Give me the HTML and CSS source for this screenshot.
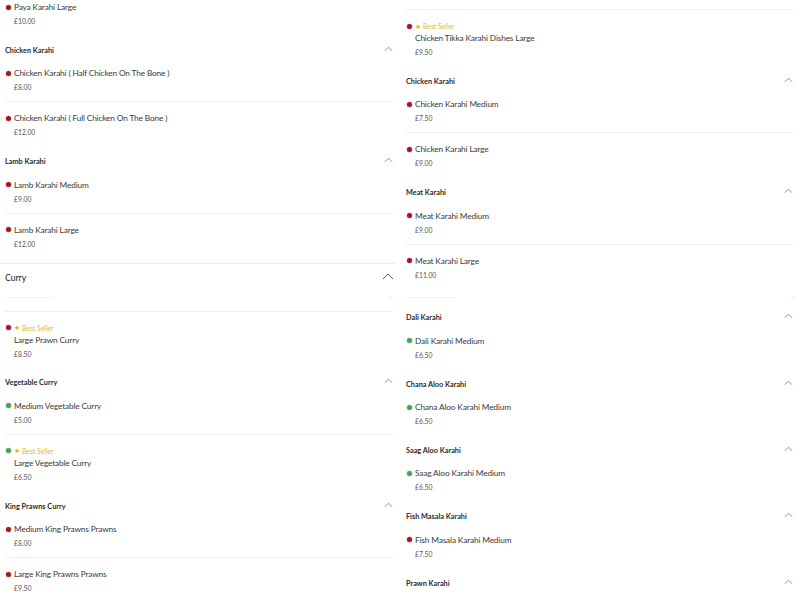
FILE: index.html
```
<!DOCTYPE html>
<html>
<head>
<meta charset="utf-8">
<link rel="stylesheet" href="styles.css">
</head>
<body>
<div class="page">
  <div class="col col-left">
    <div class="item first">
      <div class="name"><span class="dot red"></span>Paya Karahi Large</div>
      <div class="price">£10.00</div>
    </div>

    <div class="group">
      <div class="sub-head"><span>Chicken Karahi</span><svg class="chev" viewBox="0 0 10 6"><path d="M1 5 L5 1 L9 5"/></svg></div>
      <div class="item">
        <div class="name"><span class="dot red"></span>Chicken Karahi ( Half Chicken On The Bone )</div>
        <div class="price">£8.00</div>
      </div>
      <div class="item">
        <div class="name"><span class="dot red"></span>Chicken Karahi ( Full Chicken On The Bone )</div>
        <div class="price">£12.00</div>
      </div>
    </div>

    <div class="group">
      <div class="sub-head"><span>Lamb Karahi</span><svg class="chev" viewBox="0 0 10 6"><path d="M1 5 L5 1 L9 5"/></svg></div>
      <div class="item">
        <div class="name"><span class="dot red"></span>Lamb Karahi Medium</div>
        <div class="price">£9.00</div>
      </div>
      <div class="item">
        <div class="name"><span class="dot red"></span>Lamb Karahi Large</div>
        <div class="price">£12.00</div>
      </div>
    </div>

    <div class="section">
      <div class="sec-head"><span>Curry</span><svg class="chev-big" viewBox="0 0 14 8"><path d="M1 7 L7 1 L13 7"/></svg></div>
      <div class="ghost"><span class="ghost-l"></span><span class="ghost-r"></span></div>
      <div class="item">
        <div class="badge"><span class="dot red"></span><span class="star">★</span>Best Seller</div>
        <div class="name indent">Large Prawn Curry</div>
        <div class="price">£8.50</div>
      </div>

      <div class="group">
        <div class="sub-head"><span>Vegetable Curry</span><svg class="chev" viewBox="0 0 10 6"><path d="M1 5 L5 1 L9 5"/></svg></div>
        <div class="item">
          <div class="name"><span class="dot green"></span>Medium Vegetable Curry</div>
          <div class="price">£5.00</div>
        </div>
        <div class="item">
          <div class="badge"><span class="dot green"></span><span class="star">★</span>Best Seller</div>
          <div class="name indent">Large Vegetable Curry</div>
          <div class="price">£6.50</div>
        </div>
      </div>

      <div class="group">
        <div class="sub-head"><span>King Prawns Curry</span><svg class="chev" viewBox="0 0 10 6"><path d="M1 5 L5 1 L9 5"/></svg></div>
        <div class="item">
          <div class="name"><span class="dot red"></span>Medium King Prawns Prawns</div>
          <div class="price">£8.00</div>
        </div>
        <div class="item">
          <div class="name"><span class="dot red"></span>Large King Prawns Prawns</div>
          <div class="price">£9.50</div>
        </div>
      </div>
    </div>
  </div>

  <div class="col col-right">
    <div class="item topline">
      <div class="badge"><span class="dot red"></span><span class="star">★</span>Best Seller</div>
      <div class="name indent">Chicken Tikka Karahi Dishes Large</div>
      <div class="price">£9.50</div>
    </div>

    <div class="group">
      <div class="sub-head"><span>Chicken Karahi</span><svg class="chev" viewBox="0 0 10 6"><path d="M1 5 L5 1 L9 5"/></svg></div>
      <div class="item">
        <div class="name"><span class="dot red"></span>Chicken Karahi Medium</div>
        <div class="price">£7.50</div>
      </div>
      <div class="item">
        <div class="name"><span class="dot red"></span>Chicken Karahi Large</div>
        <div class="price">£9.00</div>
      </div>
    </div>

    <div class="group">
      <div class="sub-head"><span>Meat Karahi</span><svg class="chev" viewBox="0 0 10 6"><path d="M1 5 L5 1 L9 5"/></svg></div>
      <div class="item">
        <div class="name"><span class="dot red"></span>Meat Karahi Medium</div>
        <div class="price">£9.00</div>
      </div>
      <div class="item">
        <div class="name"><span class="dot red"></span>Meat Karahi Large</div>
        <div class="price">£11.00</div>
      </div>
    </div>

    <div class="ghost2"><span class="ghost-l"></span><span class="ghost-r"></span></div>

    <div class="group">
      <div class="sub-head"><span>Dali Karahi</span><svg class="chev" viewBox="0 0 10 6"><path d="M1 5 L5 1 L9 5"/></svg></div>
      <div class="item">
        <div class="name"><span class="dot green"></span>Dali Karahi Medium</div>
        <div class="price">£6.50</div>
      </div>
    </div>

    <div class="group">
      <div class="sub-head"><span>Chana Aloo Karahi</span><svg class="chev" viewBox="0 0 10 6"><path d="M1 5 L5 1 L9 5"/></svg></div>
      <div class="item">
        <div class="name"><span class="dot green"></span>Chana Aloo Karahi Medium</div>
        <div class="price">£6.50</div>
      </div>
    </div>

    <div class="group">
      <div class="sub-head"><span>Saag Aloo Karahi</span><svg class="chev" viewBox="0 0 10 6"><path d="M1 5 L5 1 L9 5"/></svg></div>
      <div class="item">
        <div class="name"><span class="dot green"></span>Saag Aloo Karahi Medium</div>
        <div class="price">£6.50</div>
      </div>
    </div>

    <div class="group">
      <div class="sub-head"><span>Fish Masala Karahi</span><svg class="chev" viewBox="0 0 10 6"><path d="M1 5 L5 1 L9 5"/></svg></div>
      <div class="item">
        <div class="name"><span class="dot red"></span>Fish Masala Karahi Medium</div>
        <div class="price">£7.50</div>
      </div>
    </div>

    <div class="group">
      <div class="sub-head"><span>Prawn Karahi</span><svg class="chev" viewBox="0 0 10 6"><path d="M1 5 L5 1 L9 5"/></svg></div>
    </div>
  </div>
</div>
</body>
</html>
```
FILE: styles.css
```
html, body {
  margin: 0;
  padding: 0;
  background: #ffffff;
  overflow: hidden;
}
body {
  font-family: "Lato", "Liberation Sans", sans-serif;
  color: #333333;
  width: 800px;
  height: 600px;
}
.page {
  display: grid;
  grid-template-columns: 390px 389px;
  column-gap: 11px;
  padding: 0 5px;
  align-items: start;
}
.col-left {
  margin-top: -9px;
}
.col-right {
  margin-top: 9px;
}
.item {
  padding: 9px 0 7px;
  border-top: 1px solid #eeeeee;
  margin-right: 2px;
}
.item.first,
.sub-head + .item,
.ghost + .item {
  border-top: none;
}
.item.topline {
  border-top: 1px solid #eeeeee;
}
.name {
  display: flex;
  align-items: center;
  height: 14px;
  font-size: 8.3px;
  letter-spacing: -0.15px;
  color: #3a3a3a;
  white-space: nowrap;
}
.name.indent {
  padding-left: 9px;
}
.price {
  height: 14px;
  line-height: 14px;
  font-size: 6.8px;
  color: #555555;
  padding-left: 9px;
}
.badge {
  display: flex;
  align-items: center;
  height: 12px;
  padding-top: 1px;
  margin-bottom: -1px;
  font-size: 6.8px;
  color: #e2b93b;
}
.star {
  font-size: 7px;
  color: #e2ad1c;
  margin-right: 2px;
  line-height: 1;
}
.dot {
  width: 5px;
  height: 5px;
  border-radius: 50%;
  margin: 0 3px 0 1px;
  flex: none;
}
.dot.red {
  background: #a1172a;
  box-shadow: 0 0 0 0.6px #f1b3b8;
}
.dot.green {
  background: #43a457;
  box-shadow: 0 0 0 0.6px #bfe3c6;
}
.group {
  margin-top: 8.3px;
}
.sub-head {
  display: flex;
  justify-content: space-between;
  align-items: center;
  height: 14px;
  font-size: 7.3px;
  font-weight: 700;
  color: #2a2a2a;
  padding-right: 2px;
}
.chev {
  width: 9px;
  height: 6px;
  margin-top: -3px;
}
.chev path, .chev-big path {
  fill: none;
  stroke: #777777;
  stroke-width: 0.9;
}
.section {
  margin-top: 5px;
  margin-left: -5px;
  padding-left: 5px;
  border-top: 1px solid #ececec;
}
.sec-head {
  display: flex;
  justify-content: space-between;
  align-items: center;
  height: 28px;
  font-size: 8.6px;
  color: #222222;
  padding-right: 1px;
}
.chev-big {
  width: 12px;
  height: 7px;
  margin-top: -2px;
}
.chev-big path {
  stroke: #444444;
  stroke-width: 1.1;
}
.ghost {
  height: 19px;
  border-bottom: 1px solid #eeeeee;
  display: flex;
  justify-content: space-between;
  align-items: flex-start;
  margin-right: 2px;
}
.ghost-l {
  display: block;
  width: 50px;
  height: 1px;
  margin-top: 5px;
  background: #f3f3f3;
}
.ghost-r {
  display: block;
  width: 4px;
  height: 1px;
  margin-top: 5px;
  background: #e6e6e6;
}
.ghost2 {
  height: 6px;
  margin-top: 8px;
  display: flex;
  justify-content: space-between;
  align-items: flex-start;
}
.ghost2 .ghost-l,
.ghost2 .ghost-r {
  margin-top: 0;
}
```
